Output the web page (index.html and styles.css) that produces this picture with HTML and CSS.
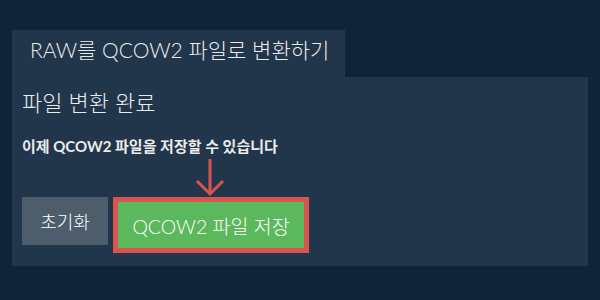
FILE: index.html
```html
<!DOCTYPE html>
<html lang="ko">
  <head>
    <meta charset="UTF-8" />
    <meta name="viewport" content="width=device-width, initial-scale=1.0" />
    <title>RAW를 QCOW2 파일로 변환하기</title>
    <link rel="stylesheet" href="styles.css">
  </head>
  <body>
    <div class="container">
      <div class="tab">RAW를 QCOW2 파일로 변환하기</div>
      <div class="panel">
        <h2 class="title">파일 변환 완료</h2>
        <p class="desc">이제 QCOW2 파일을 저장할 수 있습니다</p>
        <div class="arrow">
          <svg width="30" height="38" viewBox="0 0 30 38">
            <path d="M15 0 V35 M2 22 L15 35 L28 22" fill="none" stroke="#d9534f" stroke-width="3" />
          </svg>
        </div>
        <div class="actions">
          <button class="btn reset">초기화</button>
          <button class="btn save">QCOW2 파일 저장</button>
        </div>
      </div>
    </div>
  </body>
</html>
```

FILE: styles.css
```css
body {
  margin: 0;
  background: #0f2438;
  font-family: Lato, "Noto Sans CJK KR", sans-serif;
  font-weight: 300;
  color: #ebebeb;
}
.container {
  padding: 30px 12px 0;
}
.tab {
  display: inline-block;
  box-sizing: border-box;
  width: 333px;
  height: 47px;
  padding: 4px 0 0 18px;
  background: #22364b;
  font-size: 21px;
}
.panel {
  box-sizing: border-box;
  height: 189px;
  padding: 12px 10px 0;
  background: #22364b;
}
.title {
  margin: 0;
  font-size: 22px;
  font-weight: 300;
  line-height: 28px;
}
.desc {
  margin: 19px 0 0;
  font-size: 15px;
  font-weight: bold;
  line-height: 20px;
}
.arrow {
  height: 38px;
  margin: 3px 0 0 173px;
}
.arrow svg {
  display: block;
}
.actions {
  display: flex;
  align-items: flex-start;
  gap: 5px;
}
.btn {
  border: none;
  color: #fff;
  font-family: inherit;
  font-weight: 300;
  cursor: pointer;
}
.reset {
  width: 86px;
  height: 48px;
  background: #4e5d6c;
  font-size: 18px;
}
.save {
  box-sizing: content-box;
  width: 186px;
  height: 46px;
  padding: 0;
  border: 5px solid #d9534f;
  background: #5cb85c;
  font-size: 19.5px;
}
```
